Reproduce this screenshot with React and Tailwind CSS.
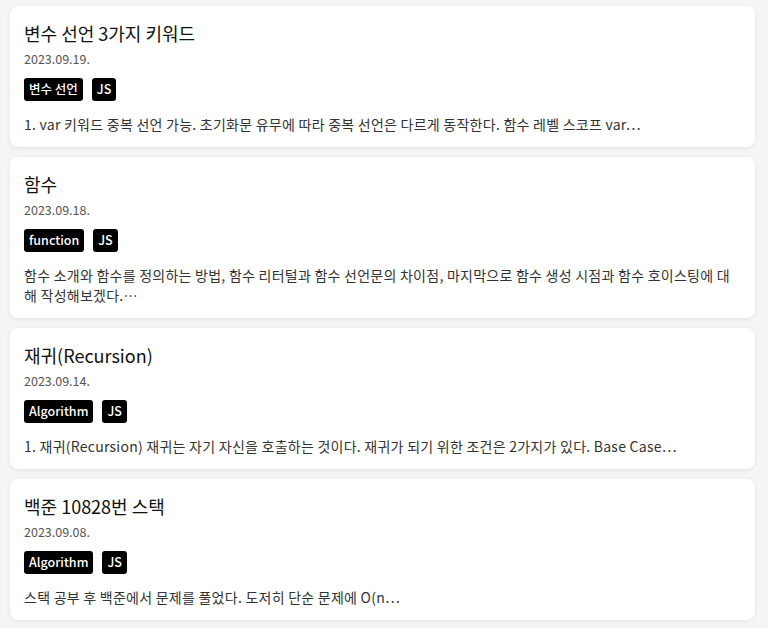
const posts = [
  {
    id: 1,
    title: "변수 선언 3가지 키워드",
    date: "2023.09.19.",
    tags: ["변수 선언", "JS"],
    summary:
      "1. var 키워드 중복 선언 가능. 초기화문 유무에 따라 중복 선언은 다르게 동작한다. 함수 레벨 스코프 var…",
  },
  {
    id: 2,
    title: "함수",
    date: "2023.09.18.",
    tags: ["function", "JS"],
    summary:
      "함수 소개와 함수를 정의하는 방법, 함수 리터털과 함수 선언문의 차이점, 마지막으로 함수 생성 시점과 함수 호이스팅에 대해 작성해보겠다.…",
  },
  {
    id: 3,
    title: "재귀(Recursion)",
    date: "2023.09.14.",
    tags: ["Algorithm", "JS"],
    summary:
      "1. 재귀(Recursion) 재귀는 자기 자신을 호출하는 것이다. 재귀가 되기 위한 조건은 2가지가 있다. Base Case…",
  },
  {
    id: 4,
    title: "백준 10828번 스택",
    date: "2023.09.08.",
    tags: ["Algorithm", "JS"],
    summary: "스택 공부 후 백준에서 문제를 풀었다. 도저히 단순 문제에 O(n…",
  },
];

function PostCard({ post }) {
  return (
    <article className="rounded-lg bg-white px-[14px] pb-[13px] pt-[13px] shadow-[0_1px_4px_rgba(0,0,0,0.08)]">
      <h2 className="text-[18px] leading-[28px] font-normal text-[#111]">
        {post.title}
      </h2>
      <p className="mt-[3px] text-[12.5px] leading-[18px] text-[#555]">
        {post.date}
      </p>
      <div className="mt-[10px] flex gap-[9px]">
        {post.tags.map((tag) => (
          <span
            key={tag}
            className="flex h-[23px] items-center rounded-[3px] bg-black px-[5px] text-[12.5px] font-medium text-white"
          >
            {tag}
          </span>
        ))}
      </div>
      <p className="mt-[13px] text-[14px] leading-[20px] tracking-[0.25px] text-[#333]">
        {post.summary}
      </p>
    </article>
  );
}

export default function App() {
  return (
    <main
      className="h-[628px] overflow-hidden bg-[#f5f5f5] pl-[10px] pr-[13px] py-[6px]"
      style={{ fontFamily: '"Noto Sans CJK KR", "Noto Sans", sans-serif' }}
    >
      <div className="flex flex-col gap-[10px]">
        {posts.map((post) => (
          <PostCard key={post.id} post={post} />
        ))}
        <div className="h-[20px] rounded-lg bg-white shadow-[0_1px_4px_rgba(0,0,0,0.08)]" />
      </div>
    </main>
  );
}
